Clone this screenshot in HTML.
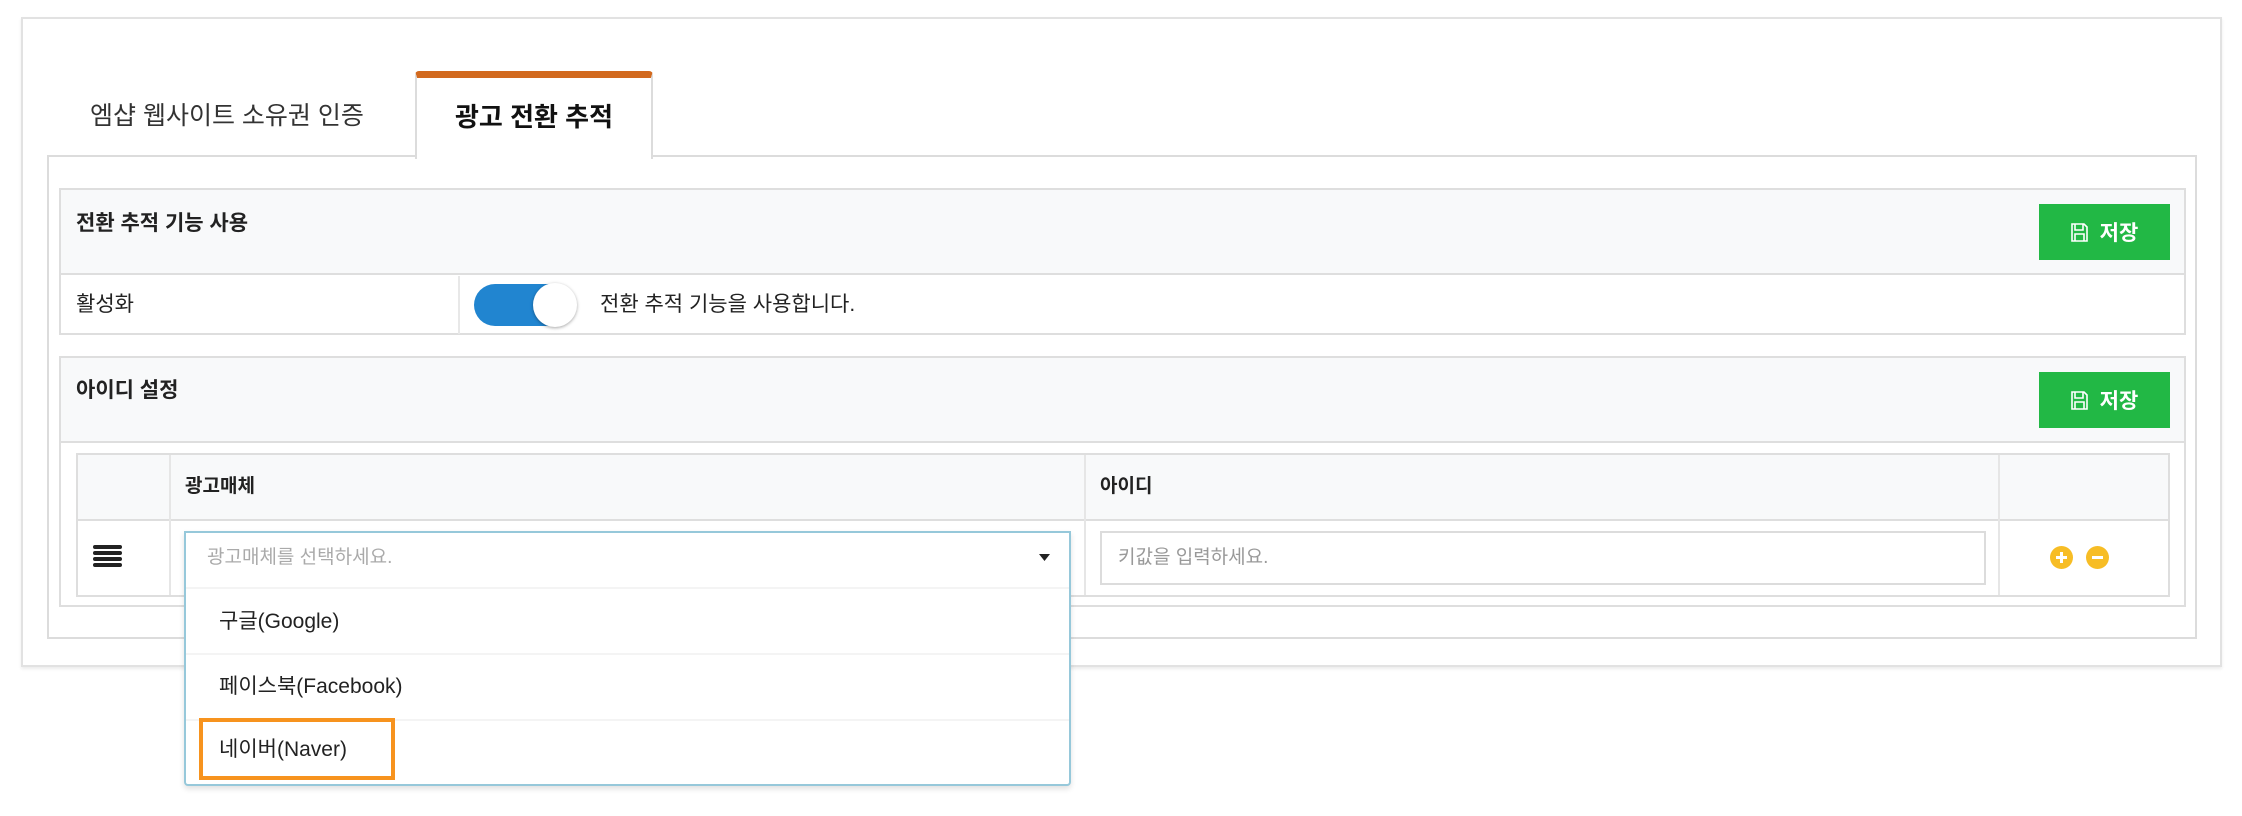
<!DOCTYPE html>
<html><head><meta charset="utf-8"><style>
*{box-sizing:border-box;margin:0;padding:0}
body{width:2242px;height:816px;background:#fff;font-family:"Liberation Sans","Noto Sans CJK KR",sans-serif;color:#222;position:relative;overflow:hidden}
.a{position:absolute}
.t{position:absolute;white-space:nowrap;line-height:1}
.btn{position:absolute;background:#22b845;color:#fff;font-weight:bold;font-size:21px;display:flex;align-items:center;justify-content:center;gap:12px}
</style></head><body>
<div class="a" style="left:21px;top:17px;width:2201px;height:650px;border:2px solid #e2e2e2;box-shadow:0 2px 3px rgba(0,0,0,.08)"></div>
<!-- content box -->
<div class="a" style="left:47px;top:155px;width:2150px;height:484px;border:2px solid #dcdcdc"></div>
<!-- tabs -->
<div class="t" style="left:90px;top:104px;font-size:25px;color:#333">엠샵 웹사이트 소유권 인증</div>
<div class="a" style="left:415px;top:71px;width:238px;height:88px;background:#fff;border:2px solid #dcdcdc;border-bottom:none;border-top:7px solid #d2691e;border-radius:4px 4px 0 0"></div>
<div class="t" style="left:415px;width:238px;text-align:center;top:104px;font-size:26px;font-weight:bold;color:#111">광고 전환 추적</div>
<!-- panel 1 -->
<div class="a" style="left:59px;top:188px;width:2127px;height:147px;border:2px solid #dedede;background:#fff"></div>
<div class="a" style="left:61px;top:190px;width:2123px;height:85px;background:#f8f9fa;border-bottom:2px solid #dedede"></div>
<div class="t" style="left:76px;top:213px;font-size:21px;font-weight:bold">전환 추적 기능 사용</div>
<div class="btn" style="left:2039px;top:204px;width:131px;height:56px"><svg width="17" height="19" viewBox="0 0 17 19"><path d="M1 1h12l3 3v14H1z M4 1v6h8V1 M4 11h9v7H4z" fill="none" stroke="#fff" stroke-width="1.6"/></svg>저장</div>
<div class="a" style="left:458px;top:276px;width:2px;height:58px;background:#e8e8e8"></div>
<div class="t" style="left:76px;top:294px;font-size:21px">활성화</div>
<div class="a" style="left:474px;top:284px;width:102px;height:42px;border-radius:21px;background:#2185d0"></div>
<div class="a" style="left:533px;top:283px;width:44px;height:44px;border-radius:50%;background:#fff;box-shadow:0 1px 3px rgba(0,0,0,.35)"></div>
<div class="t" style="left:600px;top:294px;font-size:21px">전환 추적 기능을 사용합니다.</div>
<!-- panel 2 -->
<div class="a" style="left:59px;top:356px;width:2127px;height:251px;border:2px solid #dedede;background:#fff"></div>
<div class="a" style="left:61px;top:358px;width:2123px;height:85px;background:#f8f9fa;border-bottom:2px solid #dedede"></div>
<div class="t" style="left:76px;top:380px;font-size:21px;font-weight:bold">아이디 설정</div>
<div class="btn" style="left:2039px;top:372px;width:131px;height:56px"><svg width="17" height="19" viewBox="0 0 17 19"><path d="M1 1h12l3 3v14H1z M4 1v6h8V1 M4 11h9v7H4z" fill="none" stroke="#fff" stroke-width="1.6"/></svg>저장</div>
<!-- table -->
<div class="a" style="left:76px;top:453px;width:2094px;height:144px;border:2px solid #dedede"></div>
<div class="a" style="left:78px;top:455px;width:2090px;height:66px;background:#f8f9fa;border-bottom:2px solid #dedede"></div>
<div class="a" style="left:169px;top:455px;width:2px;height:140px;background:#e6e6e6"></div>
<div class="a" style="left:1084px;top:455px;width:2px;height:140px;background:#e6e6e6"></div>
<div class="a" style="left:1998px;top:455px;width:2px;height:140px;background:#e6e6e6"></div>
<div class="t" style="left:185px;top:477px;font-size:19px;font-weight:bold">광고매체</div>
<div class="t" style="left:1100px;top:477px;font-size:19px;font-weight:bold">아이디</div>
<div class="a" style="left:93px;top:545px;width:29px;height:4px;background:#222;border-radius:2px;box-shadow:0 6px 0 #222,0 12px 0 #222,0 18px 0 #222"></div>
<div class="a" style="left:1100px;top:531px;width:886px;height:54px;border:2px solid #dcdcdc;background:#fff"></div>
<div class="t" style="left:1118px;top:548px;font-size:19px;color:#999">키값을 입력하세요.</div>
<div class="a" style="left:2050px;top:546px;width:23px;height:23px;border-radius:50%;background:#f7bd25"></div>
<div class="a" style="left:2056px;top:556px;width:11px;height:3px;background:#fff"></div>
<div class="a" style="left:2060px;top:552px;width:3px;height:11px;background:#fff"></div>
<div class="a" style="left:2086px;top:546px;width:23px;height:23px;border-radius:50%;background:#f7bd25"></div>
<div class="a" style="left:2092px;top:556px;width:11px;height:3px;background:#fff"></div>
<!-- dropdown -->
<div class="a" style="left:184px;top:531px;width:887px;height:255px;border:2px solid #96c8da;border-radius:0 0 4px 4px;background:#fff;box-shadow:0 3px 6px rgba(0,0,0,.12)"></div>
<div class="t" style="left:207px;top:548px;font-size:19px;color:#aaa">광고매체를 선택하세요.</div>
<svg class="a" style="left:1038px;top:553px" width="13" height="9" viewBox="0 0 13 9"><path d="M1 1h11L6.5 8z" fill="#222"/></svg>
<div class="a" style="left:186px;top:587px;width:883px;height:2px;background:#f4f4f4"></div>
<div class="a" style="left:186px;top:653px;width:883px;height:2px;background:#f4f4f4"></div>
<div class="a" style="left:186px;top:719px;width:883px;height:2px;background:#f4f4f4"></div>
<div class="t" style="left:219px;top:611px;font-size:21px">구글(Google)</div>
<div class="t" style="left:219px;top:676px;font-size:21px">페이스북(Facebook)</div>
<div class="a" style="left:199px;top:718px;width:196px;height:62px;border:4px solid #f7931e"></div>
<div class="t" style="left:219px;top:739px;font-size:21px">네이버(Naver)</div>
</body></html>
